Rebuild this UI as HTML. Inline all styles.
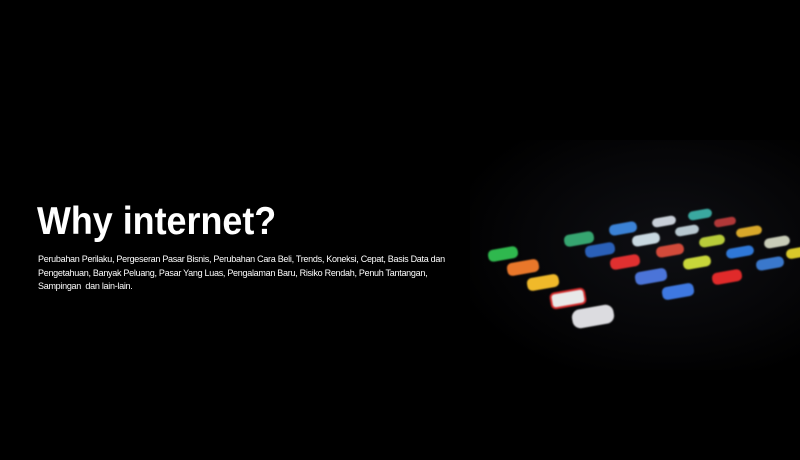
<!DOCTYPE html>
<html><head><meta charset="utf-8"><style>
html,body{margin:0;padding:0;background:#000;width:800px;height:460px;overflow:hidden;position:relative;font-family:"Liberation Sans",sans-serif}
h1{position:absolute;left:37px;top:196px;margin:0;color:#fff;font-size:39px;font-weight:bold;line-height:52px;transform:scaleX(0.92);transform-origin:left}
p{position:absolute;left:38px;top:253px;margin:0;color:#fff;font-size:9.3px;line-height:13.5px;width:450px;letter-spacing:-0.3px;white-space:nowrap;transform:scaleX(0.97);transform-origin:left}
.ph{position:absolute;left:470px;top:140px;width:330px;height:230px;background:radial-gradient(ellipse at 60% 45%,#0e0f13 0%,#060608 50%,#000 80%)}
.i{position:absolute;border-radius:5px;filter:blur(0.8px);transform:rotate(-10deg)}
</style></head><body>
<div class="ph"></div>
<div class="i" style="left:488px;top:248px;width:30px;height:12px;background:#2fb84e"></div>
<div class="i" style="left:507px;top:261px;width:32px;height:13px;background:#e9772a"></div>
<div class="i" style="left:527px;top:276px;width:32px;height:13px;background:#f0b92a"></div>
<div class="i" style="left:550px;top:290px;width:32px;height:13px;background:#e8e8e8;border:2px solid #d52a2a"></div>
<div class="i" style="left:572px;top:307px;width:42px;height:19px;background:#dcdce0;border-radius:8px"></div>
<div class="i" style="left:564px;top:233px;width:30px;height:12px;background:#36a570"></div>
<div class="i" style="left:585px;top:244px;width:30px;height:12px;background:#2a60b8"></div>
<div class="i" style="left:610px;top:256px;width:30px;height:12px;background:#e03030"></div>
<div class="i" style="left:635px;top:270px;width:32px;height:13px;background:#4b74d8"></div>
<div class="i" style="left:662px;top:285px;width:32px;height:13px;background:#3e78e0"></div>
<div class="i" style="left:609px;top:223px;width:28px;height:11px;background:#3b82d6"></div>
<div class="i" style="left:632px;top:234px;width:28px;height:11px;background:#c8d8e0"></div>
<div class="i" style="left:656px;top:245px;width:28px;height:11px;background:#d24a3a"></div>
<div class="i" style="left:683px;top:257px;width:28px;height:11px;background:#c8d63a"></div>
<div class="i" style="left:712px;top:271px;width:30px;height:12px;background:#e02a2a"></div>
<div class="i" style="left:688px;top:210px;width:24px;height:9px;background:#3aa8a0"></div>
<div class="i" style="left:652px;top:217px;width:24px;height:9px;background:#c8cfd8"></div>
<div class="i" style="left:675px;top:226px;width:24px;height:9px;background:#b8c8d0"></div>
<div class="i" style="left:699px;top:236px;width:26px;height:10px;background:#b8cc3a"></div>
<div class="i" style="left:726px;top:247px;width:28px;height:10px;background:#2f78d8"></div>
<div class="i" style="left:756px;top:258px;width:28px;height:11px;background:#3a78cc"></div>
<div class="i" style="left:736px;top:227px;width:26px;height:9px;background:#d8a82a"></div>
<div class="i" style="left:764px;top:237px;width:26px;height:10px;background:#c8ccb8"></div>
<div class="i" style="left:786px;top:248px;width:20px;height:10px;background:#d8c82a"></div>
<div class="i" style="left:714px;top:218px;width:22px;height:8px;background:#b03838"></div>
<h1>Why internet?</h1>
<p>Perubahan Perilaku, Pergeseran Pasar Bisnis, Perubahan Cara Beli, Trends, Koneksi, Cepat, Basis Data dan<br>Pengetahuan, Banyak Peluang, Pasar Yang Luas, Pengalaman Baru, Risiko Rendah, Penuh Tantangan,<br>Sampingan&nbsp; dan lain-lain.</p>
</body></html>
